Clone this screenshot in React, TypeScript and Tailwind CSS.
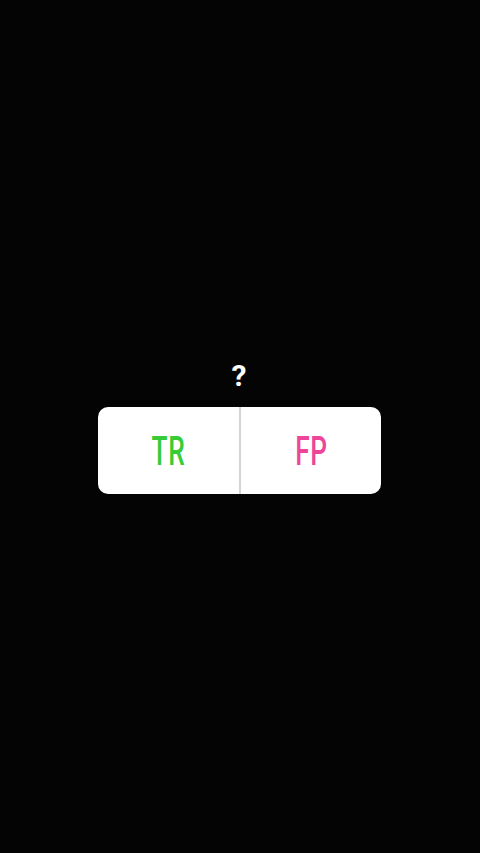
export default function App() {
  return (
    <div className="w-[480px] h-[853px] bg-[#040404] flex flex-col items-start" style={{ fontFamily: "Roboto, 'Liberation Sans', sans-serif" }}>
      <div className="h-[358px]" />
      <div className="text-white font-bold text-[30px] leading-[36px] h-[36px] w-[480px] text-center pr-[2px]">?</div>
      <div className="h-[13px]" />
      <div className="ml-[98px] w-[283px] h-[87px] bg-white rounded-[10px] flex overflow-hidden">
        <div className="w-[141px] h-full flex items-center justify-center pt-[2px]">
          <span className="text-[#36cc36] font-medium text-[41px] leading-none inline-block scale-x-[0.64] tracking-[1px]">TR</span>
        </div>
        <div className="w-[2px] h-full bg-[#d4d4d4]" />
        <div className="flex-1 h-full flex items-center justify-center pt-[2px]">
          <span className="text-[#ec4599] font-medium text-[41px] leading-none inline-block scale-x-[0.64] tracking-[1px]">FP</span>
        </div>
      </div>
    </div>
  );
}
